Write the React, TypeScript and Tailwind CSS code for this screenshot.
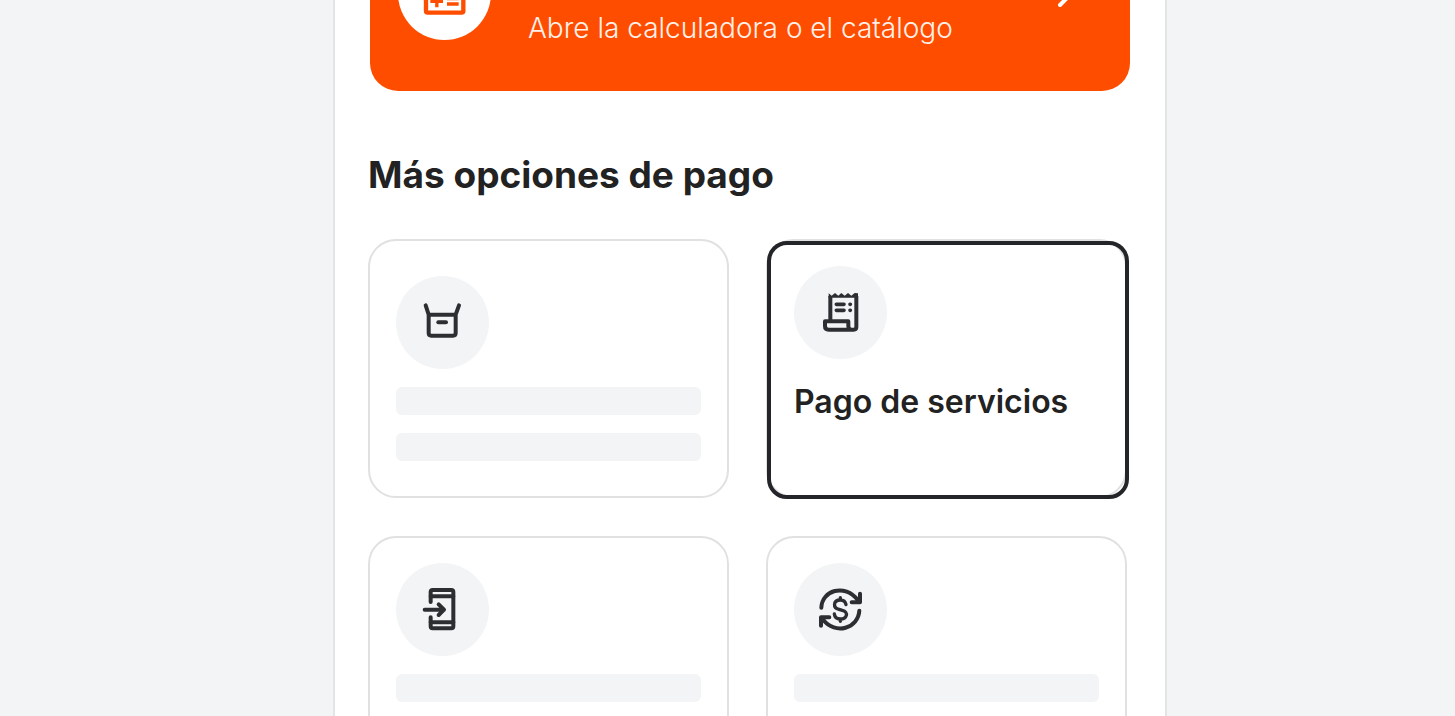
import type { ReactNode } from "react";

interface IconProps {
  viewBox: string;
  children: ReactNode;
}

const Icon = ({ viewBox, children }: IconProps) => (
  <svg
    className="h-full w-full"
    viewBox={viewBox}
    fill="none"
    stroke="currentColor"
    strokeWidth={12}
    strokeLinecap="round"
    strokeLinejoin="round"
    aria-hidden="true"
  >
    {children}
  </svg>
);

const CalculatorIcon = () => (
  <Icon viewBox="219 -159 279 279">
    <rect x="303" y="-79" width="112" height="117" rx="5" strokeWidth={13} />
    <path d="M330 -48h58" />
    <path d="M316 4h38M335.5 -15v37M366 -4h35M366 12h35" strokeWidth={10} strokeLinecap="butt" />
  </Icon>
);

const BoxIcon = () => (
  <Icon viewBox="18 18 279 279">
    <path d="M107 106l9 28v55q0 8 8 8h65q8 0 8-8v-55l10-28M116 134h81" />
    <path d="M145 157h23" />
  </Icon>
);

const ReceiptIcon = () => (
  <Icon viewBox="12 15 279 279">
    <path d="M121 177v-72M199 105v93q0 8-8 8h-75q-11 0-11-10v-15h70v14q0 10 9 11" strokeLinecap="butt" />
    <path
      d="M116 97l9 7 10-8 10 8 9-8 10 8 10-8 10 8 10-8 10 1v13h-88z"
      fill="currentColor"
      stroke="none"
    />
    <path d="M139 130h23M139 148h23M180 130h1M180 148h1" strokeWidth={11} />
  </Icon>
);

const PhoneIcon = () => (
  <Icon viewBox="18 15 279 279">
    <path d="M122 132v-30q0-6 6-6h56q6 0 6 6v103q0 6-6 6h-56q-6 0-6-6v-27" />
    <path d="M122 115h68M122 193h68" />
    <path d="M104 155h58M146 139l16 16-16 16" />
  </Icon>
);

const CurrencyIcon = () => (
  <Icon viewBox="12 15 279 279">
    <path d="M94 149c1-50 69-76 111-21M208 158c-3 52-71 76-110 26" />
    <path d="M210 107v26h-25M93 203v-25h25" />
    <path d="M168 140c-2-10-8-14-17-14-22 0-23 24-4 28l10 3c20 5 14 26-6 26-11 0-17-6-18-15M151 119v7M151 184v6" strokeWidth={10} />
  </Icon>
);

const IconCircle = ({ children }: { children: ReactNode }) => (
  <span className="block size-[93px] shrink-0 rounded-full bg-[#f3f4f6] text-[#2d2e32]">
    {children}
  </span>
);

const SkeletonLine = () => (
  <span className="block h-7 w-full rounded-md bg-[#f3f4f6]" />
);

interface OptionCardProps {
  icon: ReactNode;
  label?: string;
  lines?: number;
  centered?: boolean;
}

const OptionCard = ({ icon, label, lines = 2, centered = false }: OptionCardProps) => (
  <button
    type="button"
    className={`relative flex h-[259px] flex-col items-start gap-[18px] rounded-[28px] border-2 border-[#e1e1e1] px-[26px] text-left ${
      centered ? "justify-center" : "justify-start pt-[25px]"
    }`}
  >
    <IconCircle>{icon}</IconCircle>
    {label ? (
      <>
        <span className="pt-[5px] text-[32px] leading-10 font-semibold whitespace-nowrap">
          {label}
        </span>
        {/* Selected outline */}
        <span className="absolute top-0 -right-1 -bottom-[3px] -left-px rounded-[20px] border-4 border-[#242529]" />
      </>
    ) : (
      Array.from({ length: lines }, (_, i) => <SkeletonLine key={i} />)
    )}
  </button>
);

const App = () => (
  <div className="h-screen overflow-hidden bg-[#f3f4f6] pr-[288px] pl-[333px] font-['Inter',sans-serif] text-[#222222]">
    <main className="min-h-full border-x-2 border-[#e3e4e6] bg-white pr-[38px] pl-[33px]">
      {/* Banner */}
      <button
        type="button"
        className="-mt-[104px] -mr-[3px] ml-0.5 flex h-[195px] w-[calc(100%+1px)] items-center rounded-[28px] bg-[#ff4d00] px-7 text-left text-white"
      >
        <span className="size-[93px] shrink-0 rounded-full bg-white text-[#ff4d00]">
          <CalculatorIcon />
        </span>
        <span className="ml-[37px] flex-1 pt-[68px] text-[28px] leading-9 font-[350] whitespace-nowrap text-[#fff1ea]">
          Abre la calculadora o el catálogo
        </span>
        <svg
          className="mr-7 h-7 w-4"
          viewBox="0 0 16 28"
          fill="none"
          stroke="currentColor"
          strokeWidth={4}
          strokeLinecap="round"
          strokeLinejoin="round"
          aria-hidden="true"
        >
          <path d="M2 3l11 11L2 25" />
        </svg>
      </button>

      <h1 className="mt-[60px] text-[37px] leading-12 font-bold">
        Más opciones de pago
      </h1>

      {/* Options */}
      <section className="mt-10 grid grid-cols-2 gap-x-[37px] gap-y-[38px]">
        <OptionCard icon={<BoxIcon />} centered />
        <OptionCard icon={<ReceiptIcon />} label="Pago de servicios" />
        <OptionCard icon={<PhoneIcon />} />
        <OptionCard icon={<CurrencyIcon />} />
      </section>
    </main>
  </div>
);

export default App;
